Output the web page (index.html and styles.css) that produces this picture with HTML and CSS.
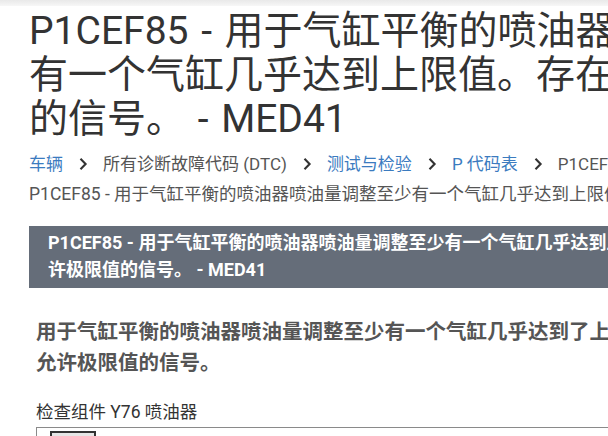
FILE: index.html
```html
<!DOCTYPE html>
<html lang="zh-CN">
<head>
<meta charset="utf-8">
<title>P1CEF85 - MED41</title>
<link rel="stylesheet" href="styles.css">
</head>
<body>
<div class="topbar"></div>
<main class="page">
  <h1 class="title">P1CEF85 - 用于气缸平衡的喷油器喷油量调整至少有一个气缸几乎达到上限值。存在允许极限值<br>的信号。 - MED41</h1>
  <nav class="crumbs">
    <a class="crumb link" href="#">车辆</a>
    <svg class="chev" viewBox="0 0 10 14" width="10" height="14"><path d="M2.5 1.8 L7.6 7 L2.5 12.2" fill="none" stroke="#333" stroke-width="2.1"/></svg>
    <span class="crumb">所有诊断故障代码 (DTC)</span>
    <svg class="chev" viewBox="0 0 10 14" width="10" height="14"><path d="M2.5 1.8 L7.6 7 L2.5 12.2" fill="none" stroke="#333" stroke-width="2.1"/></svg>
    <a class="crumb link" href="#">测试与检验</a>
    <svg class="chev" viewBox="0 0 10 14" width="10" height="14"><path d="M2.5 1.8 L7.6 7 L2.5 12.2" fill="none" stroke="#333" stroke-width="2.1"/></svg>
    <a class="crumb link" href="#">P 代码表</a>
    <svg class="chev" viewBox="0 0 10 14" width="10" height="14"><path d="M2.5 1.8 L7.6 7 L2.5 12.2" fill="none" stroke="#333" stroke-width="2.1"/></svg>
    <span class="crumb">P1CEF00 - P1CEFFF</span>
  </nav>
  <p class="current">P1CEF85 - 用于气缸平衡的喷油器喷油量调整至少有一个气缸几乎达到上限值。存在允许极限值的信号。 - MED41</p>
  <div class="banner">P1CEF85 - 用于气缸平衡的喷油器喷油量调整至少有一个气缸几乎达到上限值。存在允许极限值的信号。 - MED41</div>
  <section class="content">
    <h2 class="heading">用于气缸平衡的喷油器喷油量调整至少有一个气缸几乎达到了上限值。存在允许极限值的信号。</h2>
    <p class="step">检查组件 Y76 喷油器</p>
    <div class="frame">
      <button class="btn" type="button">继续</button>
    </div>
  </section>
</main>
</body>
</html>
```

FILE: styles.css
```css
html, body {
  margin: 0;
  padding: 0;
  overflow: hidden;
  background: #ffffff;
}
body {
  font-family: Roboto, "Noto Sans CJK SC", sans-serif;
  color: #333333;
  width: 920px;
}
.topbar {
  height: 6px;
  background: linear-gradient(#e9e9e9, #f7f7f7);
}
.page {
  padding-left: 29px;
  width: 880px;
}
.title {
  margin: 3px 0 0 0;
  width: 870px;
  font-size: 39px;
  line-height: 44px;
  font-weight: 400;
  word-spacing: 3px;
  color: #333333;
}
.crumbs {
  display: flex;
  flex-wrap: wrap;
  align-items: center;
  gap: 0 15px;
  margin-top: 10px;
  font-size: 17px;
  line-height: 26px;
  white-space: nowrap;
}
.crumb { color: #555555; text-decoration: none; }
.crumb.link { color: #3b7bbf; }
.chev { display: block; }
.current {
  margin: 4px 0 0 0;
  font-size: 17.5px;
  line-height: 26px;
  color: #555555;
  white-space: nowrap;
}
.banner {
  margin-top: 19px;
  width: 691px;
  padding: 3px 19px 5px 19px;
  background: #656d79;
  color: #ffffff;
  font-weight: 700;
  font-size: 18px;
  line-height: 27px;
}
.content {
  padding-left: 7px;
}
.heading {
  margin: 29px 0 0 0;
  width: 687px;
  font-size: 20.5px;
  line-height: 31px;
  font-weight: 700;
  color: #555555;
}
.step {
  margin: 20px 0 0 0;
  font-size: 17.5px;
  line-height: 26px;
  color: #333333;
}
.frame {
  margin-top: 2px;
  height: 40px;
  border-top: 1px solid #8a8a8a;
  border-left: 1px solid #8a8a8a;
  padding: 3px 0 0 13px;
}
.btn {
  font-family: "Noto Sans CJK SC", sans-serif;
  font-size: 15px;
  line-height: 20px;
  padding: 0 6px;
  border: 2px solid #333;
  background: #e6e6e6;
  color: #222;
}
```
